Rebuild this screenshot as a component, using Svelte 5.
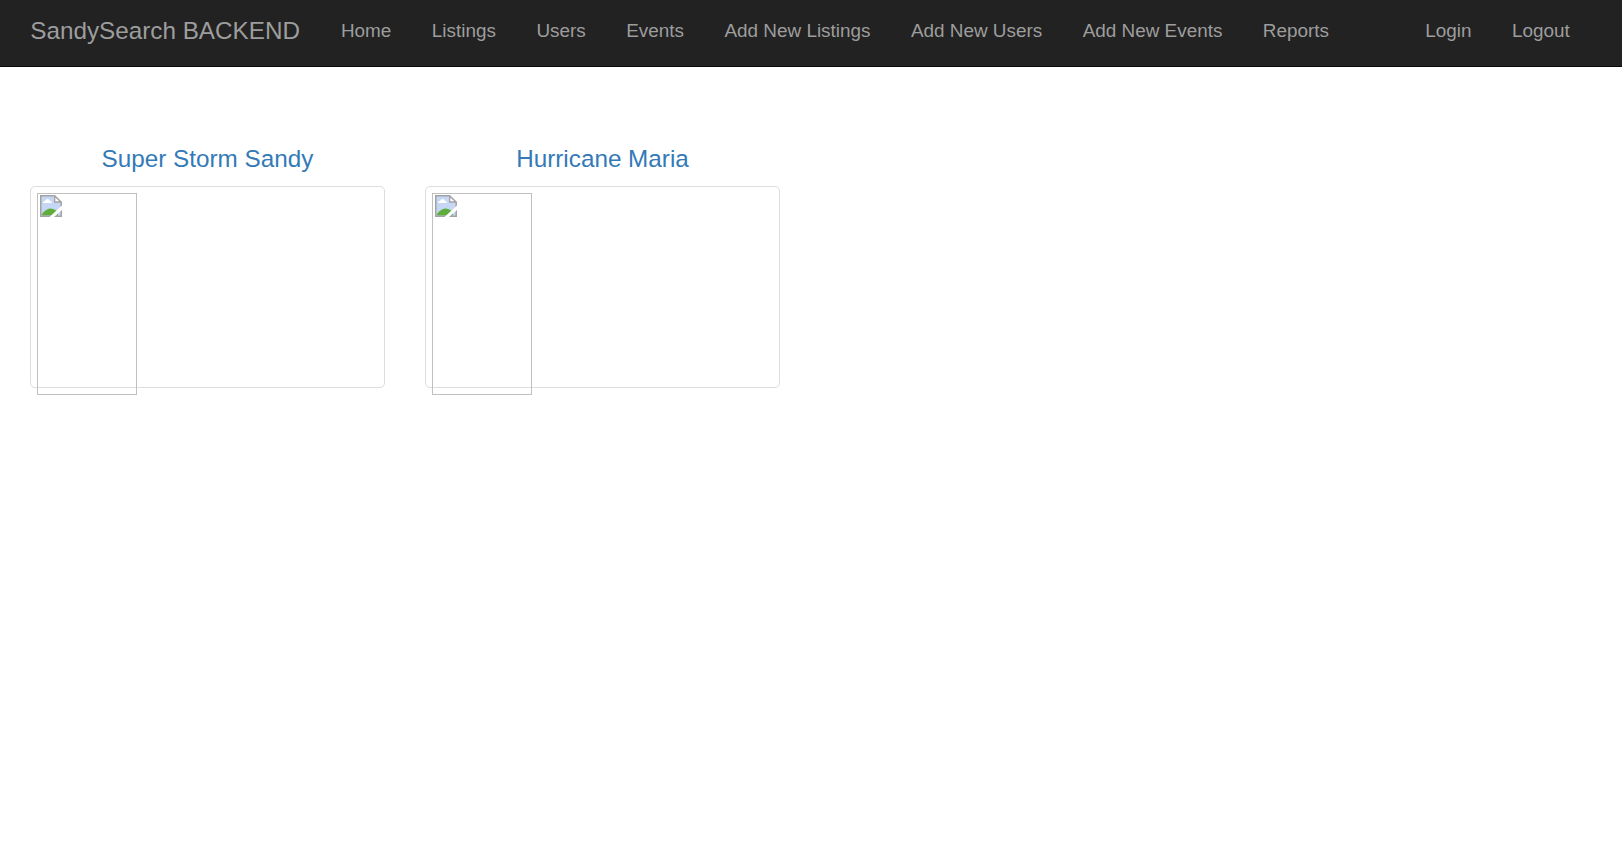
<script>
  const links = ['Home', 'Listings', 'Users', 'Events', 'Add New Listings', 'Add New Users', 'Add New Events', 'Reports'];
  const account = ['Login', 'Logout'];
  const events = ['Super Storm Sandy', 'Hurricane Maria'];
</script>

<nav>
  <a class="brand" href="#top">SandySearch BACKEND</a>
  <ul>
    {#each links as link}
      <li><a href="#top">{link}</a></li>
    {/each}
  </ul>
  <ul class="account">
    {#each account as link}
      <li><a href="#top">{link}</a></li>
    {/each}
  </ul>
</nav>

<main>
  {#each events as event}
    <section>
      <h4><a href="#top">{event}</a></h4>
      <div class="thumbnail">
        <div class="picture">
          <svg width="22" height="22" viewBox="0 0 22 22" aria-hidden="true">
            <path d="M.75 .75H14.500L21.250 7.500V21.250H.75Z" fill="#c6d7f5" />
            <path d="M3 8Q3 6 5 6Q6 4 7.500 4Q9.500 4 10 6Q12 6 12 8Z" fill="#fff" />
            <path d="M2 20.500V19Q6 13.500 11 13.500Q14.500 13.500 18 17V20.500Z" fill="#5fae3c" />
            <path d="M.75 .75H14.500L21.250 7.500V21.250H.75Z" fill="none" stroke="#a3a3a3" stroke-width="1.500" />
            <path d="M14.700 1V7H21Z" fill="#fff" stroke="#a3a3a3" stroke-width="1.300" />
            <path d="M9.500 22L22 10.500V15L14 22Z" fill="#fff" />
          </svg>
        </div>
      </div>
    </section>
  {/each}
</main>

<style>
  :global(body) {
    margin: 0;
    background: #fff;
    font-family: "Liberation Sans", Arial, sans-serif;
  }
  a {
    text-decoration: none;
  }
  nav {
    box-sizing: border-box;
    display: flex;
    height: 67px;
    padding: 0 32px 0 10px;
    background: #222;
    border-bottom: 1px solid #080808;
    font-size: 18.900px;
    line-height: 27px;
  }
  nav a {
    display: block;
    padding: 17px 20.250px;
    color: #9d9d9d;
    white-space: nowrap;
  }
  .brand {
    padding-right: 20.700px;
    font-size: 24.270px;
  }
  ul {
    display: flex;
    margin: 0;
    padding: 0;
    list-style: none;
  }
  .account {
    margin-left: auto;
  }
  main {
    box-sizing: border-box;
    display: flex;
    gap: 40px;
    min-height: 783px;
    padding: 78px 30px 0;
  }
  section {
    width: 355px;
  }
  h4 {
    margin: 0 0 14px;
    font-size: 24.270px;
    font-weight: 400;
    line-height: 27px;
    text-align: center;
  }
  h4 a {
    color: #337ab7;
  }
  .thumbnail {
    box-sizing: border-box;
    height: 202px;
    padding: 6px;
    border: 1px solid #ddd;
    border-radius: 5px;
  }
  .picture {
    box-sizing: border-box;
    width: 100px;
    height: 202px;
    padding: 1px 2px;
    border: 1px solid #c0c0c0;
  }
  svg {
    display: block;
  }
</style>
